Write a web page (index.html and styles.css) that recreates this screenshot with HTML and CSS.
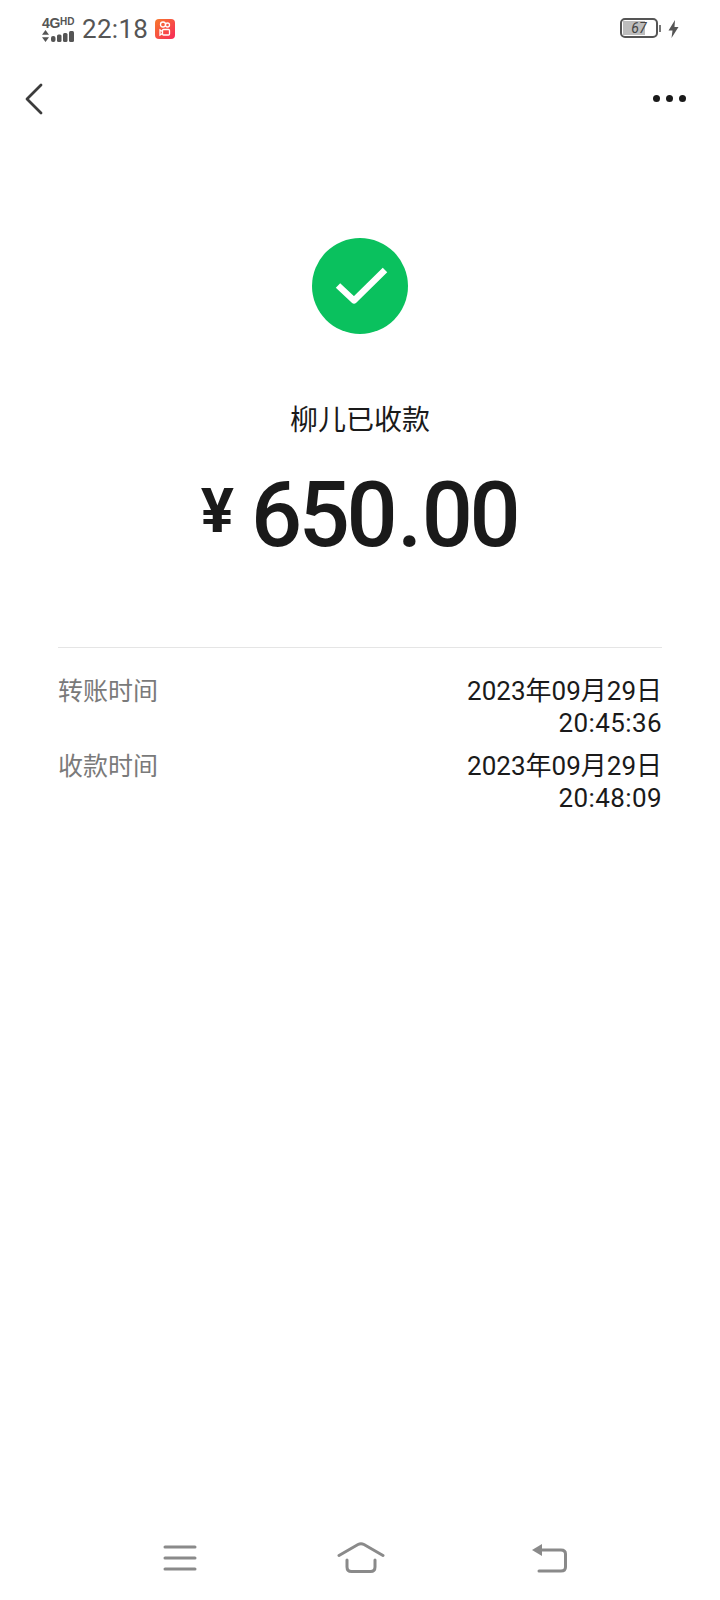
FILE: index.html
```html
<!DOCTYPE html>
<html lang="zh">
<head>
<meta charset="utf-8">
<title>转账详情</title>
<link rel="stylesheet" href="styles.css">
</head>
<body>
<div class="page">
  <header class="status">
    <div class="status-left">
      <div class="net">
        <div class="net-top"><span class="g4">4G</span><span class="hd">HD</span></div>
        <svg class="signal" width="32" height="12" viewBox="0 0 32 12"><path d="M3.500 0 7 4.800H0zM3.500 12 0 7.200h7z" fill="#555"/><rect x="9" y="6" width="4.500" height="6" rx="2" fill="#555"/><rect x="15" y="4.500" width="4.500" height="7.500" rx="1.500" fill="#555"/><rect x="21" y="3" width="4.500" height="9" rx="1.500" fill="#555"/><rect x="27" y="1" width="5" height="11" rx="1.500" fill="#555"/></svg>
      </div>
      <span class="clock">22:18</span>
      <svg class="app" width="20" height="20" viewBox="0 0 20 20"><defs><linearGradient id="ks" x1="0" y1="0" x2="1" y2="1"><stop offset="0" stop-color="#f77a2c"/><stop offset="1" stop-color="#f7285a"/></linearGradient></defs><rect width="20" height="20" rx="4" fill="url(#ks)"/><g fill="none" stroke="#fff" stroke-width="1.300"><circle cx="8" cy="5.500" r="2.500"/><circle cx="12.500" cy="6" r="2"/><rect x="7.500" y="10.500" width="7" height="5.500" rx="1"/><path d="M7.500 12.500 5 11V16L7.500 14.500"/></g></svg>
    </div>
    <div class="status-right">
      <div class="battery">
        <div class="battery-body"><span class="battery-fill"></span><span class="battery-num">67</span></div>
        <span class="battery-cap"></span>
      </div>
      <svg class="bolt" width="11" height="18" viewBox="0 0 11 18"><path d="M7 0 .5 10.500H4.500L3.500 18 10.500 7H6.500z" fill="#555"/></svg>
    </div>
  </header>

  <nav class="nav">
    <svg class="back" width="20" height="34" viewBox="0 0 20 34"><path d="M17 3 3 17 17 31" fill="none" stroke="#3c3c3c" stroke-width="2.800" stroke-linecap="round" stroke-linejoin="round"/></svg>
    <div class="more"><span></span><span></span><span></span></div>
  </nav>

  <main class="content">
    <svg class="ok" width="96" height="96" viewBox="0 0 96 96"><circle cx="48" cy="48" r="48" fill="#0ac15e"/><path d="M26 47.500 42 62.500 73 32" fill="none" stroke="#fff" stroke-width="6.400" stroke-linejoin="round"/></svg>
    <h1 class="payee">柳儿已收款</h1>
    <div class="amount"><span class="yen">¥</span><span class="value">650<span class="dot">.</span>00</span></div>
    <section class="details">
      <div class="row">
        <span class="label">转账时间</span>
        <span class="when">2023年09月29日<br><span class="time">20:45:36</span></span>
      </div>
      <div class="row">
        <span class="label">收款时间</span>
        <span class="when">2023年09月29日<br><span class="time">20:48:09</span></span>
      </div>
    </section>
  </main>

  <footer class="sysnav">
    <svg width="34" height="28" viewBox="0 0 34 28"><path d="M2 3H32M2 14H32M2 25H32" stroke="#8a8a8a" stroke-width="3" stroke-linecap="round" fill="none"/></svg>
    <svg class="sys-home" width="48" height="32" viewBox="0 0 48 32"><path d="M2 13.500 21 2.500Q24 1 27 2.500L46 13.500" stroke="#8a8a8a" stroke-width="3" stroke-linecap="round" fill="none"/><path d="M10 18V25Q10 29.500 14.500 29.500H33.500Q38 29.500 38 25V18" stroke="#8a8a8a" stroke-width="3" stroke-linecap="round" fill="none"/></svg>
    <svg width="36" height="30" viewBox="0 0 36 30"><path d="M1 7 11 1V13z" fill="#8a8a8a"/><path d="M9 7H30Q34.500 7 34.500 11V24Q34.500 28 30 28H8" stroke="#8a8a8a" stroke-width="3" stroke-linecap="round" fill="none"/></svg>
  </footer>
</div>
</body>
</html>
```
FILE: styles.css
```css
* { box-sizing: border-box; }
html, body { margin: 0; padding: 0; background: #fff; }
body { font-family: "Noto Sans CJK SC", Roboto, sans-serif; }
.page { width: 720px; height: 1600px; display: flex; flex-direction: column; overflow: hidden; }

.status { height: 58px; display: flex; justify-content: space-between; align-items: center; padding: 0 41px 0 42px; color: #555; }
.status-left, .status-right { display: flex; align-items: center; }
.net { width: 32px; display: flex; flex-direction: column; gap: 0; }
.net-top { display: flex; align-items: flex-start; height: 13px; font-family: "Liberation Sans", sans-serif; font-weight: 700; line-height: 13px; }
.g4 { font-size: 14px; letter-spacing: -.3px; }
.hd { font-size: 10px; line-height: 10px; }
.signal { display: block; }
.clock { font-family: Roboto, sans-serif; font-size: 26px; margin-left: 8px; letter-spacing: .3px; }
.app { margin-left: 7px; }
.battery { display: flex; align-items: center; margin-bottom: 2px; }
.battery-body { position: relative; width: 38px; height: 20px; border: 2px solid #555; border-radius: 5px; background: #fff; overflow: hidden; }
.battery-fill { position: absolute; left: 1px; top: 1px; bottom: 1px; width: 22px; background: #bdbdbd; }
.battery-num { position: absolute; inset: 0; text-align: center; font: italic 14px/16px Roboto, sans-serif; color: #444; }
.battery-cap { width: 2px; height: 7px; margin-left: 1px; background: #777; }
.bolt { margin-left: 7px; }

.nav { height: 81px; display: flex; justify-content: space-between; align-items: center; padding: 0 34px 0 24px; }
.more { display: flex; gap: 6px; }
.more span { width: 7px; height: 7px; border-radius: 50%; background: #1a1a1a; }

.content { flex: 1; display: flex; flex-direction: column; align-items: center; padding-top: 99px; }
.payee { margin: 64px 0 0; font-size: 28px; line-height: 40px; font-weight: 400; color: #1a1a1a; }
.amount { display: flex; align-items: flex-start; margin-top: 24px; height: 108px; line-height: 108px; color: #1a1a1a; font-family: Roboto, sans-serif; font-weight: 500; }
.yen { font-size: 62px; line-height: 62px; margin: 18px 17px 0 -2px; font-weight: 700; }
.value { font-size: 90px; letter-spacing: -3.400px; }
.dot { margin: 0 3px; }

.details { width: 604px; margin-top: 77px; border-top: 1px solid #e5e5e5; padding-top: 27px; display: flex; flex-direction: column; gap: 11px; }
.row { display: flex; justify-content: space-between; align-items: flex-start; font-size: 26px; line-height: 32px; }
.label { color: #7a7a7a; font-size: 25px; margin-top: -2px; }
.when { color: #1a1a1a; text-align: right; font-family: Roboto, "Noto Sans CJK SC", sans-serif; }
.time { letter-spacing: .4px; }

.sysnav { height: 82px; padding: 0 0 3px 163px; display: flex; gap: 140px; align-items: center; }
.sys-home { margin-right: 6px; }
```
